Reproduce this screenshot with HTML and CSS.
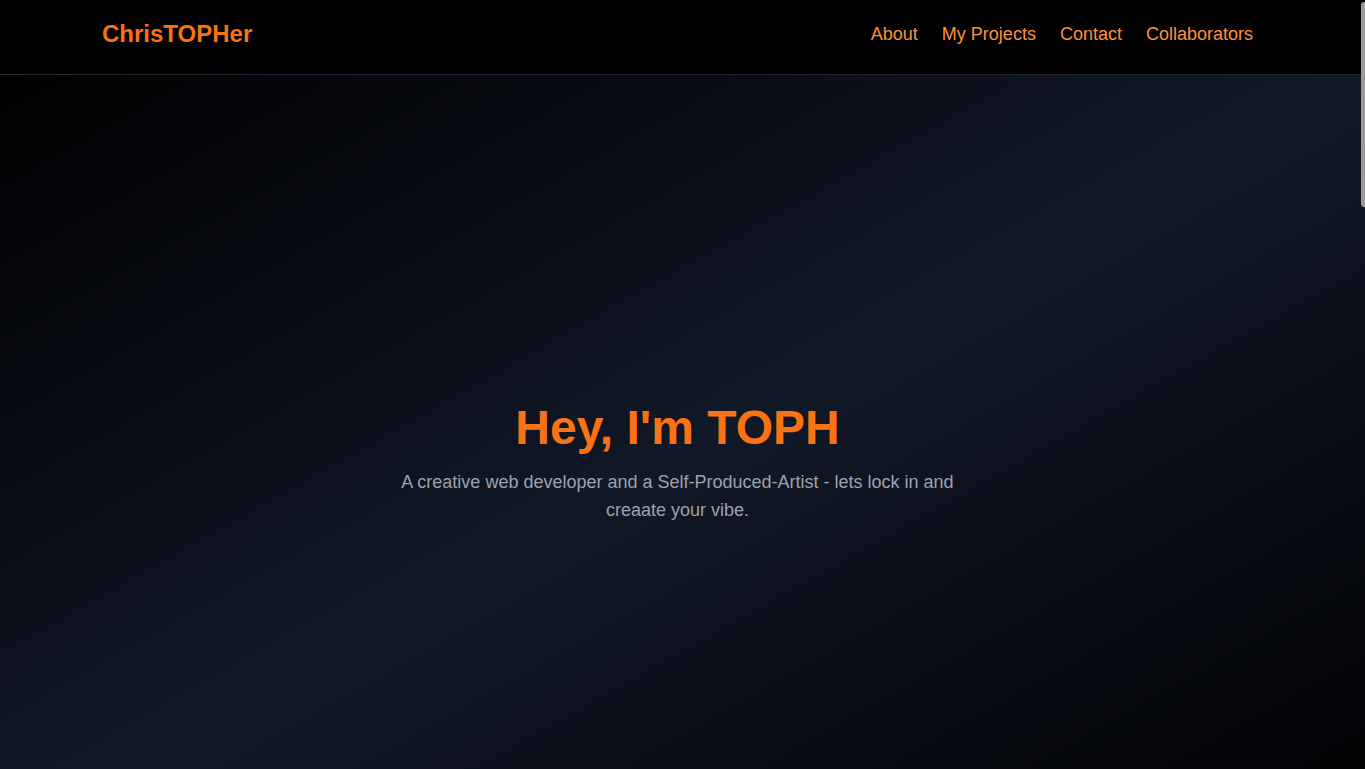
FILE: index.html
```html
<!DOCTYPE html>
<html lang="en">
<head>
    <meta charset="UTF-8">
    <meta name="viewport" content="width=device-width, initial-scale=1.0">
    <title>ChrisTOPHer</title>
    <link rel="stylesheet" href="styles.css">
</head>
<body>
    <header class="site-header">
        <div class="wrap header-inner">
            <a class="logo" href="#">ChrisTOPHer</a>
            <nav class="nav">
                <a href="#about">About</a>
                <a href="#projects">My Projects</a>
                <a href="#contact">Contact</a>
                <a href="#collaborators">Collaborators</a>
            </nav>
        </div>
    </header>
    <section class="hero">
        <h1>Hey, I'm TOPH</h1>
        <p>A creative web developer and a Self-Produced-Artist - lets lock in and creaate your vibe.</p>
    </section>
    <div class="scroll-thumb"></div>
</body>
</html>
```

FILE: styles.css
```css
html, body {
    margin: 0;
    height: 100%;
    overflow: hidden;
}
body {
    font-family: "Liberation Sans", Arial, Helvetica, sans-serif;
    background-color: #000;
    color: #fff;
}
a {
    text-decoration: none;
}
.wrap {
    max-width: 1151px;
    margin: 0 auto;
}
.site-header {
    background-color: #000;
    border-bottom: 1px solid #1f2430;
    padding-right: 10px;
}
.header-inner {
    display: flex;
    justify-content: space-between;
    align-items: center;
    padding: 18px 0 24px 0;
}
.logo {
    color: #f97316;
    font-size: 24px;
    line-height: 32px;
    font-weight: bold;
}
.nav {
    display: flex;
    gap: 24px;
}
.nav a {
    color: #fb923c;
    font-size: 18px;
    line-height: 28px;
}
.hero {
    height: calc(100vh - 75px);
    box-sizing: border-box;
    padding: 329px 10px 0 0;
    display: flex;
    flex-direction: column;
    align-items: center;
    text-align: center;
    background: linear-gradient(to bottom right, #000000, #111827, #000000);
    background-size: 100% 769px;
    background-repeat: no-repeat;
}
.hero h1 {
    margin: 0 0 16px 0;
    color: #f97316;
    font-size: 48px;
    line-height: 48px;
    font-weight: bold;
}
.hero p {
    margin: 0;
    max-width: 576px;
    color: #9ca3af;
    font-size: 18px;
    line-height: 28px;
}
.scroll-thumb {
    position: fixed;
    top: 2px;
    right: 0;
    width: 4px;
    height: 205px;
    background-color: #9a9a9a;
    border-radius: 3px 0 0 3px;
}
```
